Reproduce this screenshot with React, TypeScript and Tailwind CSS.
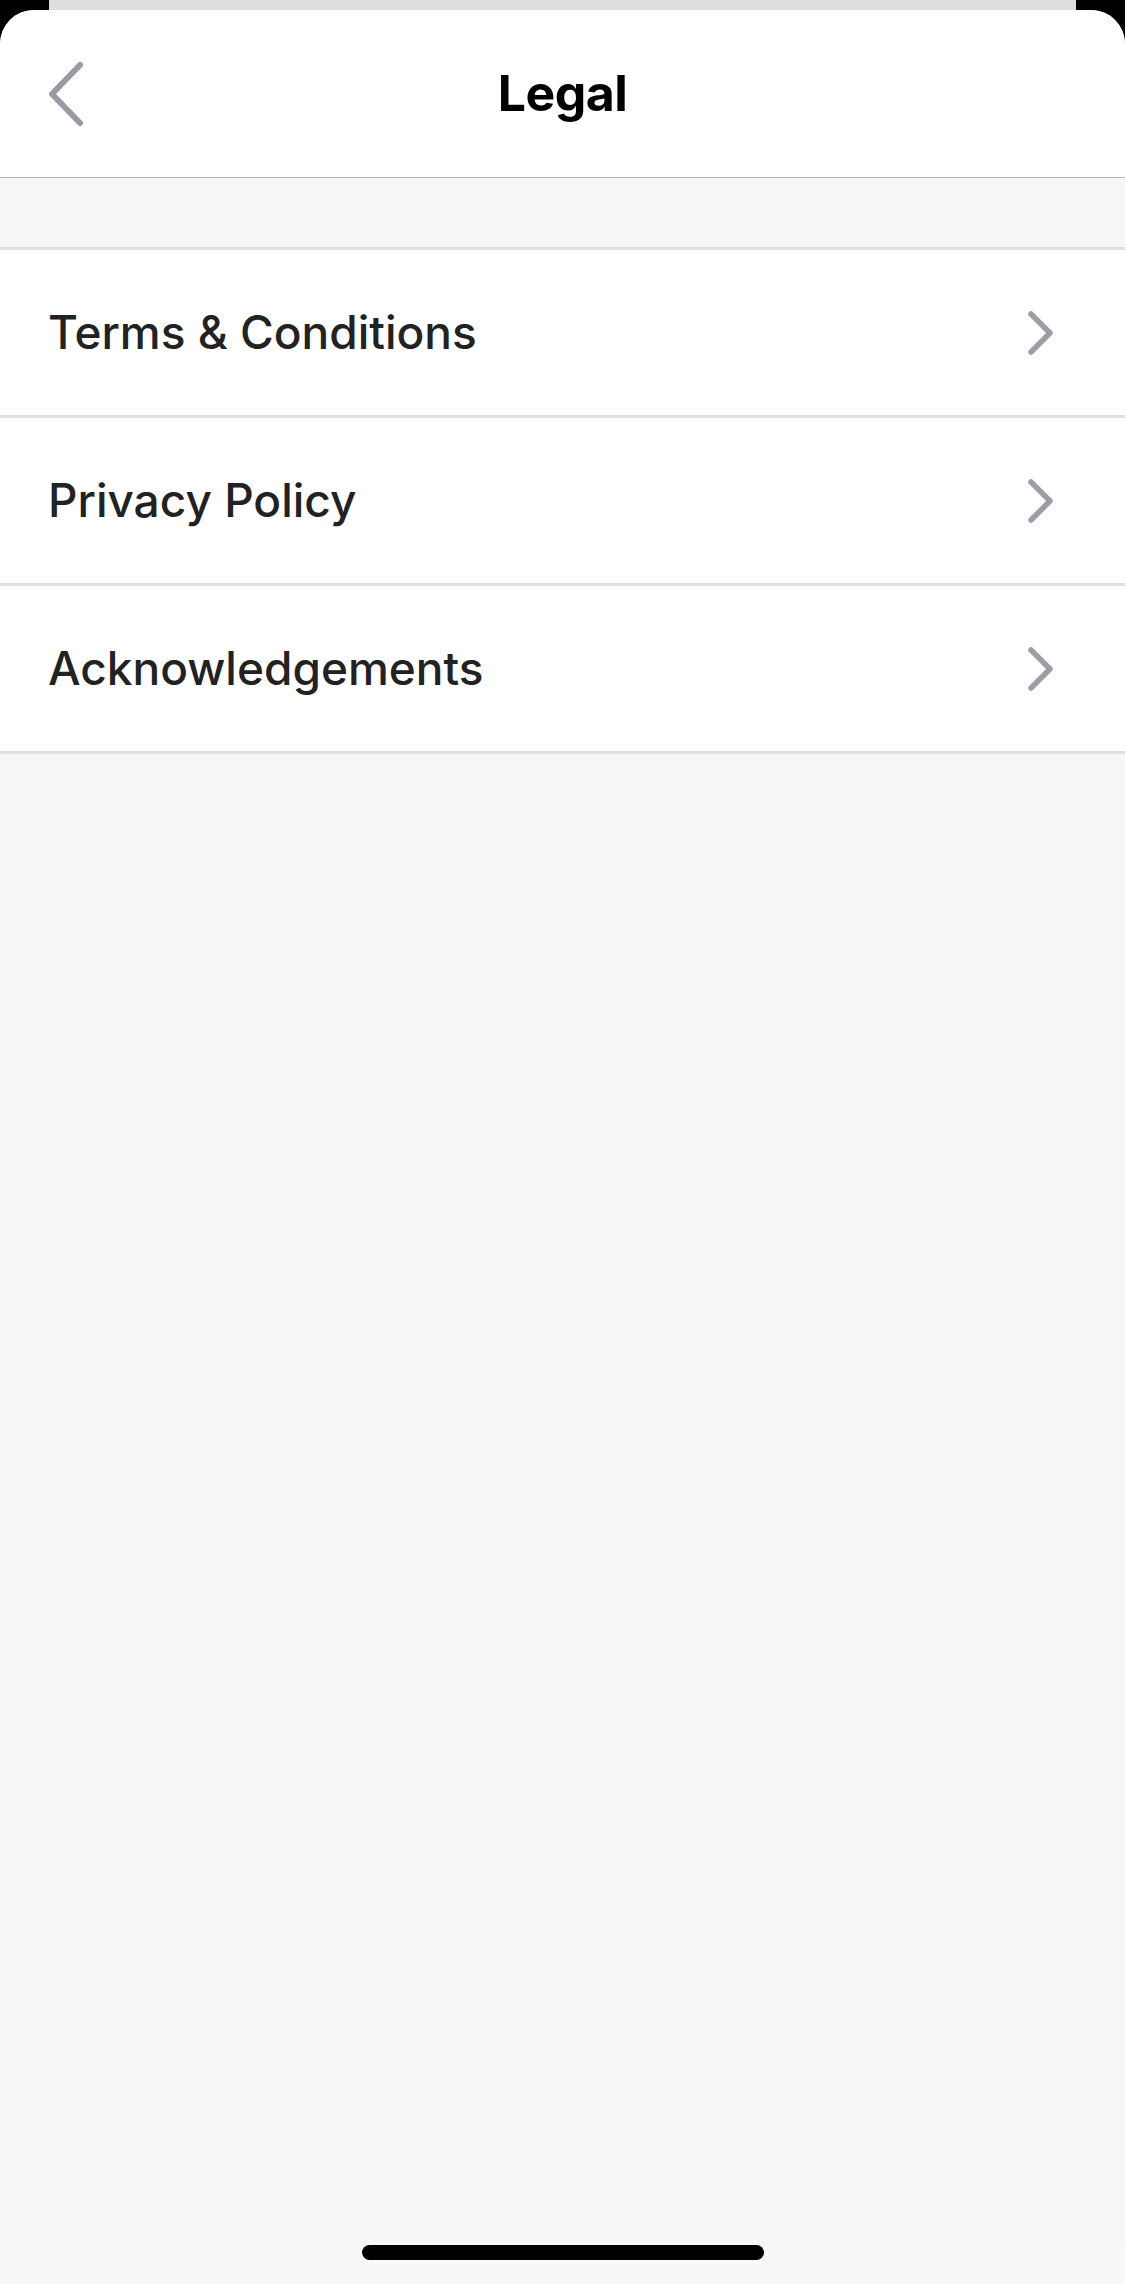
import React from "react";

const rows = ["Terms & Conditions", "Privacy Policy", "Acknowledgements"];

function ChevronRight() {
  return (
    <svg width="30" height="48" viewBox="0 0 30 48" fill="none">
      <path d="M5 5 L24 24 L5 43" stroke="#9d9ca7" strokeWidth="5.5" strokeLinecap="round" strokeLinejoin="round" />
    </svg>
  );
}

function ChevronLeft() {
  return (
    <svg width="40" height="66" viewBox="0 0 40 66" fill="none">
      <path d="M34 4 L6 33 L34 62" stroke="#9a99a4" strokeWidth="6" strokeLinecap="round" strokeLinejoin="round" />
    </svg>
  );
}

export default function App() {
  return (
    <div className="w-[1125px] h-[2284px] bg-black flex flex-col overflow-hidden">
      <div className="h-[10px] px-[49px] shrink-0">
        <div className="h-full bg-[#dedede]" />
      </div>
      <div className="flex-1 flex flex-col bg-[#f6f6f6] rounded-t-[34px] overflow-hidden">
        <div className="h-[168px] bg-white border-b border-[#b5b5b5] relative flex items-center justify-center shrink-0">
          <div className="absolute left-[46px] top-[51px]">
            <ChevronLeft />
          </div>
          <span className="text-[50px] font-bold text-black tracking-[-0.5px]" style={{ fontFamily: "Inter, 'Liberation Sans', sans-serif" }}>
            Legal
          </span>
        </div>
        <div className="h-[69px] shrink-0" />
        <div className="flex flex-col border-b-[3px] border-[#e0e0e0]">
          {rows.map((r) => (
            <div key={r} className="h-[168px] bg-white border-t-[3px] border-[#e0e0e0] flex items-center justify-between pl-[48px] pr-[69px]">
              <span className="text-[46px] font-medium text-[#222222]" style={{ fontFamily: "Inter, 'Noto Sans', sans-serif" }}>
                {r}
              </span>
              <ChevronRight />
            </div>
          ))}
        </div>
        <div className="flex-1" />
        <div className="h-[39px] flex justify-center shrink-0 bg-[#f8f8f8]">
          <div className="w-[402px] h-[15px] rounded-full bg-black" />
        </div>
      </div>
    </div>
  );
}
